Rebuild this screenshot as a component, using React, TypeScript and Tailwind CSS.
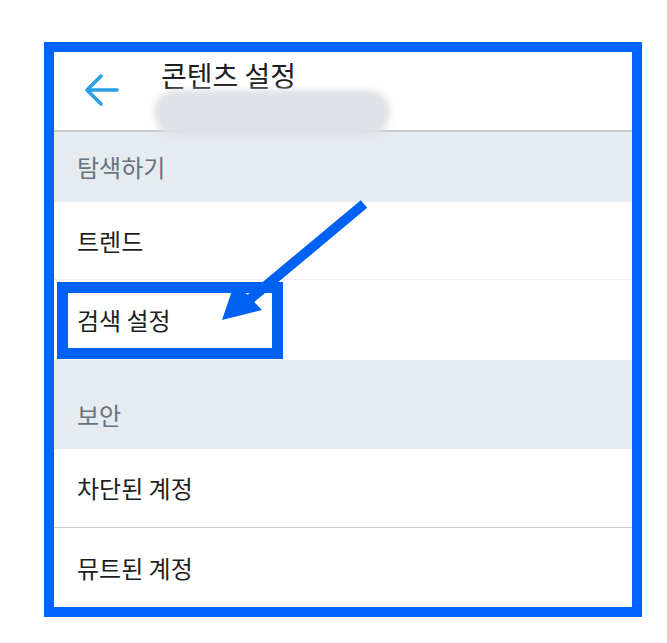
import React from "react";

const Row = ({label, className = ""}: {label: string; className?: string}) => (
    <div className={`flex items-center pl-[23px] text-[24px] text-[#1c1f22] ${className}`}>
        {label}
    </div>
)

const Section = ({label, className = ""}: {label: string; className?: string}) => (
    <div className={`flex items-center pl-[23px] bg-[#e6ebf0] text-[24px] text-[#67737e] ${className}`}>
        {label}
    </div>
)

const App = () => {
    return (
        <div className="w-[667px] h-[643px] bg-white pt-[42px] pl-[44px]" style={{fontFamily: '"Noto Sans CJK KR", "Noto Sans", sans-serif'}}>
            <div className="relative w-[598px] border-[10px] border-[#0062ff] bg-white">
                {/* header */}
                <div className="flex items-start h-[80px] border-b-2 border-[#c5c9cd] bg-white pl-[30px]">
                    <svg className="mt-[22px] shrink-0" width="36" height="36" viewBox="0 0 36 36" fill="none">
                        <path d="M3 16 H33 M17 2 L3 16 L17 30" stroke="#2a9fe4" strokeWidth="3.5" strokeLinecap="round" strokeLinejoin="round"/>
                    </svg>
                    <div className="ml-[41px] mt-[2px] text-[28px] leading-[42px] text-[#1c1f22]">콘텐츠 설정</div>
                </div>

                <Section label="탐색하기" className="h-[70px]"/>
                <Row label="트렌드" className="h-[78px] border-b border-dotted border-[#dde3e8]"/>
                <Row label="검색 설정" className="h-[80px]"/>
                <Section label="보안" className="h-[89px] pt-[20px]"/>
                <Row label="차단된 계정" className="h-[79px] border-b border-[#c8ccd0]"/>
                <Row label="뮤트된 계정" className="h-[79px]"/>

                {/* blurred redaction */}
                <div className="absolute left-[100px] top-[38px] w-[236px] h-[46px] rounded-[22px] bg-[#dfe2e6] blur-[3px]"></div>

                {/* highlight box */}
                <div className="absolute left-[3px] top-[230px] w-[226px] h-[77px] border-[11px] border-[#0062f5]"></div>

                {/* arrow */}
                <svg className="absolute left-[150px] top-[130px]" width="180" height="150" viewBox="0 0 180 150" fill="none">
                    <path d="M160 22 L45 118" stroke="#0062f5" strokeWidth="10" strokeLinecap="butt"/>
                    <polygon points="18,138 31,100 58,128" fill="#0062f5"/>
                </svg>
            </div>
        </div>
    )
}

export default App
